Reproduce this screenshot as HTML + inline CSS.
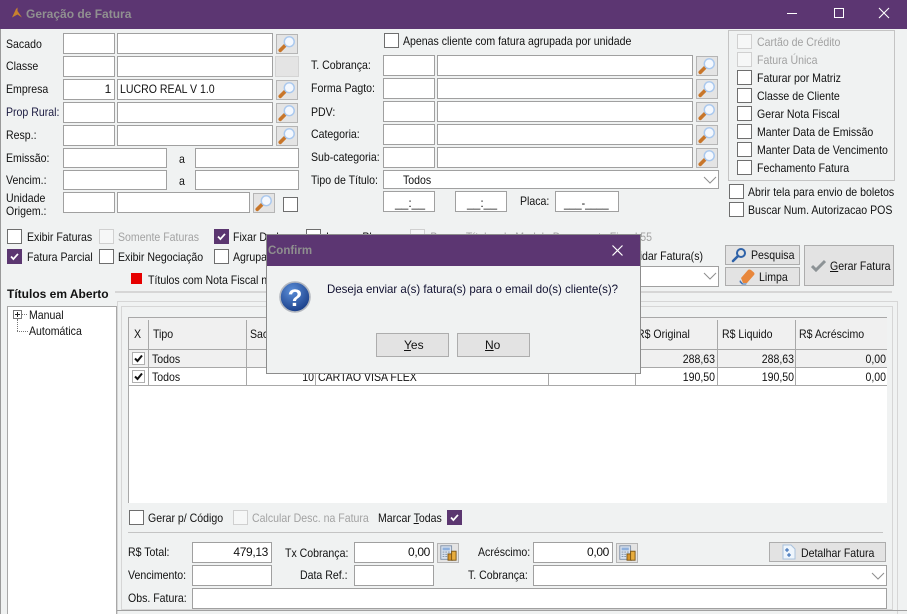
<!DOCTYPE html>
<html><head><meta charset="utf-8">
<style>
html,body{margin:0;padding:0}
body{width:907px;height:614px;overflow:hidden;position:relative;background:#f0f2f2;font:12px "Liberation Sans",sans-serif;color:#111}
div,span.a,svg.a{position:absolute;box-sizing:border-box}
.i{background:#fff;border:1px solid #a0a0a0}
.t{white-space:nowrap;line-height:14px;height:14px;transform:scaleX(.88);transform-origin:0 50%}
.tr{transform-origin:100% 50%;text-align:right}
.n{transform:none}
.r{text-align:right;padding-right:3px;line-height:19px;white-space:nowrap;color:#111;letter-spacing:-.35px}
.c{width:15px;height:15px;background:#fff;border:1px solid #6e6e6e}
.d{border-color:#d0d0d0;background:#f6f7f7}
.g{color:#a2a2a2}
.k{width:15px;height:15px;background:#5b3670;border:1px solid #5b3670}
.b{background:#e3e3e3;border:1px solid #adadad}
.l{width:22px;height:20px;background:#e4e4e4;border:1px solid #b5b5b5}
.v{width:1px;background:#a8a8a8}
.h{height:1px;background:#a8a8a8}
u{text-decoration:underline}
</style></head><body>
<svg width="0" height="0" style="position:absolute"><defs>
<symbol id="m" viewBox="0 0 22 20"><path d="M3.500 17L9.500 11" stroke="#c8762a" stroke-width="4" stroke-linecap="round"/><circle cx="13.500" cy="7.500" r="5.500" fill="#f4f8fe" stroke="#a9c8ee" stroke-width="1.600"/></symbol>
<symbol id="x" viewBox="0 0 15 15"><path d="M3.500 7.500L6.200 10.500L11.500 4.500" fill="none" stroke="#fff" stroke-width="2"/></symbol>
<symbol id="ca" viewBox="0 0 22 20"><rect x="3" y="2" width="12" height="15" fill="#d9e2ee" stroke="#7d8ea5"/><rect x="5" y="4" width="8" height="3" fill="#8fb0dc"/><path d="M5 9h8M5 11.500h8M5 14h8" stroke="#7d8ea5" stroke-dasharray="2 1"/><rect x="11" y="11" width="5" height="7" fill="#d8952a" stroke="#7a5413"/><rect x="15" y="8" width="5" height="10" fill="#e8ad3e" stroke="#7a5413"/></symbol>
<symbol id="ar" viewBox="0 0 14 8"><path d="M1 1L7 7L13 1" fill="none" stroke="#8e8e8e"/></symbol>
</defs></svg>

<div style="left:0;top:0;width:1px;height:614px;background:#9a9a9a"></div>
<div style="left:0;top:0;width:907px;height:29px;background:#5c3672"></div>
<svg class="a" style="left:10px;top:6px" width="14" height="14" viewBox="0 0 14 14"><path d="M2 11.500L6 3L7.500 1.500L7.500 5L12 11.500L7.500 8.500Z" fill="#c8822e"/></svg>
<div class="t n" style="left:26px;top:7px;font-weight:bold;color:#909090;font-size:12px">Geração de Fatura</div>
<div style="left:787px;top:13px;width:10px;height:1px;background:#fff"></div>
<div style="left:834px;top:8px;width:10px;height:10px;border:1px solid #fff"></div>
<svg class="a" style="left:878px;top:7px" width="12" height="12" viewBox="0 0 12 12"><path d="M1 1L11 11M11 1L1 11" stroke="#fff" stroke-width="1.100"/></svg>

<!-- left form -->
<div class="t" style="left:6px;top:37px">Sacado</div>
<div class="t" style="left:6px;top:59px">Classe</div>
<div class="t" style="left:6px;top:82px">Empresa</div>
<div class="t" style="left:6px;top:105px;color:#1a1a40">Prop Rural:</div>
<div class="t" style="left:6px;top:128px">Resp.:</div>
<div class="t" style="left:6px;top:151px">Emissão:</div>
<div class="t" style="left:6px;top:173px">Vencim.:</div>
<div class="t" style="left:6px;top:191px">Unidade</div>
<div class="t" style="left:6px;top:204px">Origem.:</div>

<div class="i" style="left:63px;top:33px;width:52px;height:21px"></div><div class="i" style="left:117px;top:33px;width:156px;height:21px"></div>
<div class="i" style="left:63px;top:56px;width:52px;height:21px"></div><div class="i" style="left:117px;top:56px;width:156px;height:21px"></div>
<div class="i r" style="left:63px;top:79px;width:52px;height:21px">1</div><div class="i" style="left:117px;top:79px;width:156px;height:21px"></div><div class="t" style="left:120px;top:82px">LUCRO REAL V 1.0</div>
<div class="i" style="left:63px;top:102px;width:52px;height:21px"></div><div class="i" style="left:117px;top:102px;width:156px;height:21px"></div>
<div class="i" style="left:63px;top:125px;width:52px;height:21px"></div><div class="i" style="left:117px;top:125px;width:156px;height:21px"></div>
<div class="l" style="left:276px;top:34px"><svg width="20" height="18"><use href="#m"/></svg></div>
<div style="left:275px;top:56px;width:24px;height:21px;background:#e4e4e4;border:1px solid #d4d4d4"></div>
<div class="l" style="left:276px;top:80px"><svg width="20" height="18"><use href="#m"/></svg></div>
<div class="l" style="left:276px;top:103px"><svg width="20" height="18"><use href="#m"/></svg></div>
<div class="l" style="left:276px;top:126px"><svg width="20" height="18"><use href="#m"/></svg></div>
<div class="i" style="left:63px;top:148px;width:104px;height:20px"></div><div class="t" style="left:179px;top:152px">a</div><div class="i" style="left:195px;top:148px;width:104px;height:20px"></div>
<div class="i" style="left:63px;top:170px;width:104px;height:20px"></div><div class="t" style="left:179px;top:174px">a</div><div class="i" style="left:195px;top:170px;width:104px;height:20px"></div>
<div class="i" style="left:63px;top:192px;width:52px;height:21px"></div><div class="i" style="left:117px;top:192px;width:133px;height:21px"></div>
<div class="l" style="left:253px;top:193px"><svg width="20" height="18"><use href="#m"/></svg></div>
<div class="c" style="left:283px;top:197px"></div>

<!-- middle form -->
<div class="c" style="left:384px;top:33px"></div>
<div class="t" style="left:403px;top:34px">Apenas cliente com fatura agrupada por unidade</div>
<div class="t" style="left:311px;top:58px">T. Cobrança:</div>
<div class="t" style="left:311px;top:81px">Forma Pagto:</div>
<div class="t" style="left:311px;top:105px">PDV:</div>
<div class="t" style="left:311px;top:127px">Categoria:</div>
<div class="t" style="left:311px;top:150px">Sub-categoria:</div>
<div class="t" style="left:311px;top:173px">Tipo de Título:</div>
<div class="i" style="left:383px;top:55px;width:52px;height:21px"></div><div class="i" style="left:437px;top:55px;width:256px;height:21px"></div>
<div class="i" style="left:383px;top:78px;width:52px;height:21px"></div><div class="i" style="left:437px;top:78px;width:256px;height:21px"></div>
<div class="i" style="left:383px;top:101px;width:52px;height:21px"></div><div class="i" style="left:437px;top:101px;width:256px;height:21px"></div>
<div class="i" style="left:383px;top:124px;width:52px;height:21px"></div><div class="i" style="left:437px;top:124px;width:256px;height:21px"></div>
<div class="i" style="left:383px;top:147px;width:52px;height:21px"></div><div class="i" style="left:437px;top:147px;width:256px;height:21px"></div>
<div class="l" style="left:696px;top:56px"><svg width="20" height="18"><use href="#m"/></svg></div>
<div class="l" style="left:696px;top:79px"><svg width="20" height="18"><use href="#m"/></svg></div>
<div class="l" style="left:696px;top:102px"><svg width="20" height="18"><use href="#m"/></svg></div>
<div class="l" style="left:696px;top:125px"><svg width="20" height="18"><use href="#m"/></svg></div>
<div class="l" style="left:696px;top:148px"><svg width="20" height="18"><use href="#m"/></svg></div>
<div class="i" style="left:383px;top:170px;width:336px;height:19px"></div>
<div class="t" style="left:403px;top:173px">Todos</div>
<svg class="a" style="left:703px;top:176px" width="14" height="8"><use href="#ar"/></svg>
<div class="i" style="left:383px;top:191px;width:52px;height:21px"></div><div class="t n" style="left:395px;top:196px">__:__</div>
<div class="i" style="left:455px;top:191px;width:52px;height:21px"></div><div class="t n" style="left:467px;top:196px">__:__</div>
<div class="t" style="left:520px;top:194px">Placa:</div>
<div class="i" style="left:555px;top:191px;width:64px;height:21px"></div><div class="t" style="left:564px;top:196px">___-____</div>

<!-- right group -->
<div style="left:728px;top:30px;width:167px;height:151px;border:1px solid #c4c4c4"></div>
<div class="c d" style="left:737px;top:34px"></div><div class="t g" style="left:757px;top:35px">Cartão de Crédito</div>
<div class="c d" style="left:737px;top:52px"></div><div class="t g" style="left:757px;top:53px">Fatura Única</div>
<div class="c" style="left:737px;top:70px"></div><div class="t" style="left:757px;top:71px">Faturar por Matriz</div>
<div class="c" style="left:737px;top:88px"></div><div class="t" style="left:757px;top:89px">Classe de Cliente</div>
<div class="c" style="left:737px;top:106px"></div><div class="t" style="left:757px;top:107px">Gerar Nota Fiscal</div>
<div class="c" style="left:737px;top:124px"></div><div class="t" style="left:757px;top:125px">Manter Data de Emissão</div>
<div class="c" style="left:737px;top:142px"></div><div class="t" style="left:757px;top:143px">Manter Data de Vencimento</div>
<div class="c" style="left:737px;top:160px"></div><div class="t" style="left:757px;top:161px">Fechamento Fatura</div>
<div class="c" style="left:729px;top:184px"></div><div class="t" style="left:748px;top:185px">Abrir tela para envio de boletos</div>
<div class="c" style="left:729px;top:202px"></div><div class="t" style="left:748px;top:203px">Buscar Num. Autorizacao POS</div>

<!-- option rows -->
<div class="c" style="left:7px;top:229px"></div><div class="t" style="left:27px;top:230px">Exibir Faturas</div>
<div class="c d" style="left:99px;top:229px"></div><div class="t g" style="left:118px;top:230px">Somente Faturas</div>
<div class="k" style="left:214px;top:229px"><svg width="13" height="13"><use href="#x"/></svg></div><div class="t" style="left:233px;top:230px">Fixar Dados</div>
<div class="c" style="left:306px;top:229px"></div><div class="t" style="left:326px;top:230px">Ignorar Placa</div>
<div class="c d" style="left:410px;top:229px"></div><div class="t tr g" style="left:400px;top:230px;width:252px">Buscar Títulos do Modelo Documento Fiscal 55</div>
<div class="k" style="left:7px;top:249px"><svg width="13" height="13"><use href="#x"/></svg></div><div class="t" style="left:27px;top:250px">Fatura Parcial</div>
<div class="c" style="left:99px;top:249px"></div><div class="t" style="left:118px;top:250px">Exibir Negociação</div>
<div class="c" style="left:214px;top:249px"></div><div class="t" style="left:233px;top:250px">Agrupar</div>
<div class="t tr" style="left:583px;top:249px;width:120px">Consolidar Fatura(s)</div>
<div class="i" style="left:560px;top:266px;width:159px;height:21px"></div>
<svg class="a" style="left:703px;top:272px" width="14" height="8"><use href="#ar"/></svg>
<div style="left:131px;top:273px;width:11px;height:11px;background:#e60000"></div>
<div class="t" style="left:148px;top:273px">Títulos com Nota Fiscal não emitida</div>

<div class="b" style="left:725px;top:245px;width:75px;height:20px"></div>
<svg class="a" style="left:731px;top:247px" width="16" height="16" viewBox="0 0 16 16"><circle cx="10" cy="6" r="4" fill="none" stroke="#2f62a8" stroke-width="2"/><path d="M7 9L2 14" stroke="#2f62a8" stroke-width="2.600" stroke-linecap="round"/></svg>
<div class="t" style="left:751px;top:248px">Pesquisa</div>
<div class="b" style="left:725px;top:267px;width:75px;height:19px"></div>
<svg class="a" style="left:739px;top:268px" width="16" height="17" viewBox="0 0 16 17"><path d="M2 10L9 2Q10 1 12 2L15 4.500Q16 6 15 7L8 15H4Z" fill="#e8873c"/><path d="M1 12L4 15.500H8L7 16.500H3L.5 14Z" fill="#3f70b5"/></svg>
<div class="t" style="left:759px;top:270px">Limpa</div>
<div class="b" style="left:804px;top:245px;width:90px;height:41px"></div>
<svg class="a" style="left:811px;top:259px" width="15" height="13" viewBox="0 0 15 13"><path d="M1 7L5 11L14 2" fill="none" stroke="#8d9396" stroke-width="3"/></svg>
<div class="t" style="left:830px;top:259px"><u>G</u>erar Fatura</div>

<!-- group -->
<div class="t n" style="left:7px;top:287px;font-weight:bold">Títulos em Aberto</div>
<div style="left:115px;top:291px;width:777px;height:2px;background:#d6d6d6"></div>
<div style="left:7px;top:306px;width:110px;height:308px;background:#fff;border:1px solid #a8a8a8;border-bottom:0"></div>
<div style="left:13px;top:310px;width:9px;height:9px;background:#fff;border:1px solid #777"></div>
<div style="left:15px;top:314px;width:5px;height:1px;background:#222"></div>
<div style="left:17px;top:312px;width:1px;height:5px;background:#222"></div>
<div style="left:22px;top:314px;width:5px;border-top:1px dotted #777"></div>
<div style="left:17px;top:319px;height:12px;border-left:1px dotted #777"></div>
<div style="left:17px;top:331px;width:11px;border-top:1px dotted #777"></div>
<div class="t" style="left:29px;top:308px">Manual</div>
<div class="t" style="left:29px;top:324px">Automática</div>

<div style="left:117px;top:301px;width:781px;height:313px;border:1px solid #d6d6d6;border-bottom:0"></div>
<div style="left:121px;top:306px;width:772px;height:304px;border:1px solid #d6d6d6"></div>
<div style="left:117px;top:610px;width:790px;height:1px;background:#a0a0a0"></div>

<!-- grid -->
<div style="left:128px;top:317px;width:759px;height:186px;background:#fff;border-top:1px solid #a8a8a8;border-left:1px solid #a8a8a8"></div>
<div style="left:129px;top:318px;width:758px;height:32px;background:#f0f0f0"></div>
<div style="left:129px;top:350px;width:758px;height:17px;background:#f0f0f0"></div>
<div class="h" style="left:128px;top:349px;width:759px"></div>
<div class="h" style="left:128px;top:367px;width:759px"></div>
<div class="h" style="left:128px;top:385px;width:759px"></div>
<div class="v" style="left:148px;top:320px;height:65px"></div>
<div class="v" style="left:246px;top:320px;height:65px"></div>
<div class="v" style="left:315px;top:367px;height:18px"></div>
<div class="v" style="left:548px;top:367px;height:18px"></div>
<div class="v" style="left:635px;top:320px;height:65px"></div>
<div class="v" style="left:717px;top:320px;height:65px"></div>
<div class="v" style="left:795px;top:320px;height:65px"></div>
<div class="t" style="left:134px;top:327px">X</div>
<div class="t" style="left:153px;top:327px">Tipo</div>
<div class="t" style="left:250px;top:327px">Sacado</div>
<div class="t" style="left:637px;top:327px">R$ Original</div>
<div class="t" style="left:722px;top:327px">R$ Liquido</div>
<div class="t" style="left:799px;top:327px">R$ Acréscimo</div>
<div style="left:132px;top:352px;width:13px;height:13px;background:#fff;border:1px solid #b0b0b0"></div>
<svg class="a" style="left:133px;top:353px" width="11" height="11" viewBox="0 0 11 11"><path d="M2 5.500L4.500 8L9 2.500" fill="none" stroke="#111" stroke-width="2"/></svg>
<div style="left:132px;top:370px;width:13px;height:13px;background:#fff;border:1px solid #b0b0b0"></div>
<svg class="a" style="left:133px;top:371px" width="11" height="11" viewBox="0 0 11 11"><path d="M2 5.500L4.500 8L9 2.500" fill="none" stroke="#111" stroke-width="2"/></svg>
<div class="t" style="left:152px;top:352px">Todos</div>
<div class="t" style="left:152px;top:370px">Todos</div>
<div class="t tr" style="left:290px;top:370px;width:24px">10</div>
<div class="t" style="left:318px;top:370px">CARTAO VISA FLEX</div>
<div class="t tr" style="left:635px;top:352px;width:80px">288,63</div>
<div class="t tr" style="left:717px;top:352px;width:77px">288,63</div>
<div class="t tr" style="left:795px;top:352px;width:91px">0,00</div>
<div class="t tr" style="left:635px;top:370px;width:80px">190,50</div>
<div class="t tr" style="left:717px;top:370px;width:77px">190,50</div>
<div class="t tr" style="left:795px;top:370px;width:91px">0,00</div>

<!-- bottom -->
<div class="c" style="left:129px;top:510px"></div><div class="t" style="left:148px;top:511px">Gerar p/ Código</div>
<div class="c d" style="left:233px;top:510px"></div><div class="t g" style="left:252px;top:511px">Calcular Desc. na Fatura</div>
<div class="t" style="left:378px;top:511px">Marcar <u>T</u>odas</div>
<div class="k" style="left:447px;top:510px"><svg width="13" height="13"><use href="#x"/></svg></div>
<div style="left:128px;top:532px;width:755px;height:1px;background:#c4c4c4"></div>
<div class="t" style="left:128px;top:545px">R$ Total:</div>
<div class="i r" style="left:192px;top:542px;width:80px;height:21px">479,13</div>
<div class="t" style="left:285px;top:546px">Tx Cobrança:</div>
<div class="i r" style="left:354px;top:542px;width:80px;height:21px">0,00</div>
<div class="l" style="left:437px;top:543px"><svg width="20" height="18"><use href="#ca"/></svg></div>
<div class="t" style="left:478px;top:545px">Acréscimo:</div>
<div class="i r" style="left:533px;top:542px;width:80px;height:21px">0,00</div>
<div class="l" style="left:616px;top:543px"><svg width="20" height="18"><use href="#ca"/></svg></div>
<div class="b" style="left:769px;top:542px;width:117px;height:20px"></div>
<svg class="a" style="left:782px;top:544px" width="14" height="16" viewBox="0 0 14 16"><path d="M1 1H9L13 5V15H1Z" fill="#eef5fc" stroke="#a9c2dd"/><path d="M5 4V8M3 6H7M7 9V13M5 11H9" stroke="#2a62b0"/></svg>
<div class="t" style="left:801px;top:546px">Detalhar Fatura</div>
<div class="t" style="left:128px;top:568px">Vencimento:</div>
<div class="i" style="left:192px;top:565px;width:80px;height:21px"></div>
<div class="t" style="left:300px;top:568px">Data Ref.:</div>
<div class="i" style="left:354px;top:565px;width:80px;height:21px"></div>
<div class="t" style="left:468px;top:568px">T. Cobrança:</div>
<div class="i" style="left:533px;top:565px;width:354px;height:21px"></div>
<svg class="a" style="left:871px;top:572px" width="14" height="8"><use href="#ar"/></svg>
<div class="t" style="left:128px;top:591px">Obs. Fatura:</div>
<div class="i" style="left:192px;top:588px;width:695px;height:21px"></div>

<!-- dialog -->
<div style="left:266px;top:234px;width:375px;height:140px;background:#f0f2f2;border:1px solid #8c8c8c"></div>
<div style="left:267px;top:235px;width:373px;height:31px;background:#5c3672"></div>
<div class="t n" style="left:268px;top:244px;font-weight:bold;color:#8f8f8f;font-size:11.500px">Confirm</div>
<svg class="a" style="left:612px;top:245px" width="11" height="11" viewBox="0 0 11 11"><path d="M.5 .5L10.500 10.500M10.500 .5L.5 10.500" stroke="#fff" stroke-width="1.200"/></svg>
<svg class="a" style="left:279px;top:281px" width="32" height="32" viewBox="0 0 32 32">
<defs><radialGradient id="q" cx=".4" cy=".3" r=".8"><stop offset="0" stop-color="#5b8ed8"/><stop offset="1" stop-color="#12357f"/></radialGradient></defs>
<circle cx="16" cy="16" r="15" fill="url(#q)" stroke="#b4b8bf" stroke-width="1.600"/>
<text x="16" y="25" text-anchor="middle" font-family="Liberation Sans" font-weight="bold" font-size="24" fill="#fff">?</text></svg>
<div class="t" style="left:327px;top:282px;transform:scaleX(.957);color:#101030">Deseja enviar a(s) fatura(s) para o email do(s) cliente(s)?</div>
<div class="b" style="left:376px;top:333px;width:73px;height:24px"></div>
<div class="t n" style="left:404px;top:338px"><u>Y</u>es</div>
<div class="b" style="left:457px;top:333px;width:73px;height:24px"></div>
<div class="t n" style="left:485px;top:338px"><u>N</u>o</div>
</body></html>
